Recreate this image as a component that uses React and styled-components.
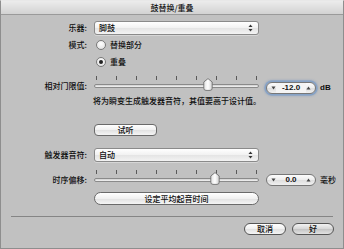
import React from "react";
import styled, { createGlobalStyle } from "styled-components";

const Global = createGlobalStyle`
  html, body { margin: 0; padding: 0; background: #c2c2c2; }
  body { font-family: "Noto Sans CJK SC", "Noto Sans", sans-serif; }
  * { box-sizing: border-box; }
`;

const Window = styled.div`
  width: 344px;
  height: 249px;
  background: #c1c1c1;
  border: 1px solid #8e8e8e;
  border-top-color: #e8e8e8;
  display: flex;
  flex-direction: column;
  color: #0e0e0e;
  font-size: 8px;
  font-weight: 500;
  overflow: hidden;
`;

const TitleBar = styled.div`
  height: 14px;
  flex: none;
  background: linear-gradient(#ececec, #d2d2d2);
  border-bottom: 1px solid #9a9a9a;
  display: flex;
  align-items: center;
  justify-content: center;
  font-size: 8px;
  line-height: 1;
  color: #111;
`;

const Row = styled.div`
  display: flex;
  align-items: ${(p) => p.$align || "center"};
  height: ${(p) => p.$h}px;
  margin-top: ${(p) => p.$mt}px;
  flex: none;
`;

const Label = styled.div`
  width: 86px;
  margin-right: 7px;
  text-align: right;
  white-space: nowrap;
  line-height: 1;
  margin-top: ${(p) => p.$pt || 0}px;
`;

const Spacer = styled.div`
  width: 93px;
  flex: none;
`;

const Popup = styled.div`
  width: 165px;
  height: 14px;
  border: 1px solid #8a8a8a;
  border-radius: 3px;
  background: linear-gradient(#ffffff, #f1f1f1 50%, #e4e4e4 51%, #f3f3f3);
  display: flex;
  align-items: center;
  justify-content: space-between;
  padding: 0 5px 0 4px;
  line-height: 1;
  box-shadow: 0 1px 0 rgba(255,255,255,0.35);
`;

const Arrows = () => (
  <svg width="5" height="8" viewBox="0 0 5 8">
    <path d="M2.5 0.5 L4.5 3 L0.5 3 Z" fill="#333" />
    <path d="M2.5 7.5 L4.5 5 L0.5 5 Z" fill="#333" />
  </svg>
);

const RadioLabel = styled.label`
  display: flex;
  align-items: center;
  gap: 4px;
  line-height: 1;
  margin-left: 2px;
`;

const RadioDot = styled.span`
  width: 10px;
  height: 10px;
  border-radius: 50%;
  border: 1px solid #7a7a7a;
  background: radial-gradient(circle at 50% 35%, #ffffff, #e6e6e6 70%, #d0d0d0);
  display: flex;
  align-items: center;
  justify-content: center;
  &::after {
    content: "";
    width: 4px;
    height: 4px;
    border-radius: 50%;
    background: ${(p) => (p.$on ? "#222" : "transparent")};
  }
`;

const SliderBox = styled.div`
  position: relative;
  width: 165px;
  height: 20px;
  flex: none;
`;

const Ticks = styled.div`
  display: flex;
  gap: 19px;
  padding-left: 2px;
  height: 4px;
`;

const Tick = styled.span`
  width: 1px;
  height: 4px;
  background: #5a5a5a;
`;

const Track = styled.div`
  margin-top: 4px;
  height: 4px;
  border: 1px solid #8a8a8a;
  border-radius: 2px;
  background: linear-gradient(#cfcfcf, #f4f4f4);
`;

const Thumb = styled.svg`
  position: absolute;
  top: 2px;
`;

const Slider = ({ at }) => (
  <SliderBox>
    <Ticks>
      {Array.from({ length: 9 }).map((_, i) => (
        <Tick key={i} />
      ))}
    </Ticks>
    <Track />
    <Thumb style={{ left: at - 5 }} width="10" height="13" viewBox="0 0 10 13">
      <defs>
        <linearGradient id="tg" x1="0" x2="1" y1="0" y2="0">
          <stop offset="0" stopColor="#e0e0e0" />
          <stop offset="0.5" stopColor="#ffffff" />
          <stop offset="1" stopColor="#cfcfcf" />
        </linearGradient>
      </defs>
      <path
        d="M5 0.6 L9.2 4 L9.2 10.2 Q9.2 12.4 7 12.4 L3 12.4 Q0.8 12.4 0.8 10.2 L0.8 4 Z"
        fill="url(#tg)"
        stroke="#6e6e6e"
        strokeWidth="0.9"
      />
    </Thumb>
  </SliderBox>
);

const Stepper = styled.div`
  width: 50px;
  height: 12px;
  margin-left: 7px;
  margin-top: ${(p) => p.$mt}px;
  border: 1px solid #777;
  border-radius: 6px;
  background: linear-gradient(#fdfdfd, #ececec 50%, #dedede 51%, #f0f0f0);
  display: flex;
  align-items: center;
  justify-content: space-between;
  padding: 0 4px;
  line-height: 1;
  font-size: 8px;
  font-weight: bold;
  font-family: "Liberation Sans", Arial, sans-serif;
  color: #111;
  box-shadow: ${(p) => (p.$focus ? "0 0 0 1.5px #86a2c6, 0 0 2px 2px rgba(120,150,190,0.6)" : "none")};
`;

const StepValue = styled.span`
  flex: 1;
  text-align: center;
  background: ${(p) => (p.$focus ? "#f4f4f4" : "transparent")};
  padding: 1px 0;
`;

const Tri = ({ up }) => (
  <svg width="5" height="4" viewBox="0 0 5 4">
    <path d={up ? "M2.5 0.5 L4.5 3.5 L0.5 3.5 Z" : "M0.5 0.5 L4.5 0.5 L2.5 3.5 Z"} fill="#444" />
  </svg>
);

const Unit = styled.span`
  margin-left: 4px;
  margin-top: ${(p) => p.$mt}px;
  line-height: 12px;
  font-family: ${(p) => (p.$latin ? '"Liberation Sans", Arial, sans-serif' : 'inherit')};
  font-weight: ${(p) => (p.$latin ? "bold" : "500")};
`;

const Note = styled.div`
  line-height: 1;
  white-space: nowrap;
  margin-left: -1px;
`;

const PushButton = styled.button`
  width: ${(p) => p.$w}px;
  height: ${(p) => p.$h || 12}px;
  padding: 0;
  border: 1px solid ${(p) => (p.$dark ? "#555" : "#6a6a6a")};
  border-radius: ${(p) => p.$r}px;
  background: ${(p) =>
    p.$default
      ? "linear-gradient(#f2f2f2, #d6d6d6 50%, #c4c4c4 51%, #e2e2e2)"
      : "linear-gradient(#ffffff, #f0f0f0 50%, #e1e1e1 51%, #f5f5f5)"};
  font-family: "Noto Sans CJK SC", sans-serif;
  font-size: 8px;
  font-weight: 500;
  line-height: 1;
  color: #111;
  display: flex;
  align-items: center;
  justify-content: center;
  flex: none;
`;

const Separator = styled.div`
  height: 1px;
  background: #858585;
  margin: 11px 10px 0 10px;
  flex: none;
`;

const Footer = styled.div`
  display: flex;
  justify-content: flex-end;
  gap: 6px;
  padding-right: 9px;
  margin-top: 6px;
`;

export default function App() {
  return (
    <>
      <Global />
      <Window>
        <TitleBar>鼓替换/重叠</TitleBar>

        <Row $h={14} $mt={6}>
          <Label>乐器:</Label>
          <Popup>
            <span>脚鼓</span>
            <Arrows />
          </Popup>
        </Row>

        <Row $h={14} $mt={3}>
          <Label>模式:</Label>
          <RadioLabel>
            <RadioDot />
            替换部分
          </RadioLabel>
        </Row>

        <Row $h={14} $mt={3}>
          <Spacer />
          <RadioLabel>
            <RadioDot $on />
            重叠
          </RadioLabel>
        </Row>

        <Row $h={20} $mt={7} $align="flex-start">
          <Label $pt={6}>相对门限值:</Label>
          <Slider at={114} />
          <Stepper $mt={6} $focus>
            <Tri />
            <StepValue $focus>-12.0</StepValue>
            <Tri up />
          </Stepper>
          <Unit $mt={6} $latin>dB</Unit>
        </Row>

        <Row $h={10} $mt={0}>
          <Spacer />
          <Note>将为瞬变生成触发器音符，其值要高于设计值。</Note>
        </Row>

        <Row $h={12} $mt={18}>
          <Spacer />
          <PushButton $w={63} $r={4}>试听</PushButton>
        </Row>

        <Row $h={14} $mt={12}>
          <Label>触发器音符:</Label>
          <Popup>
            <span>自动</span>
            <Arrows />
          </Popup>
        </Row>

        <Row $h={20} $mt={8} $align="flex-start">
          <Label $pt={6}>时序偏移:</Label>
          <Slider at={121} />
          <Stepper $mt={4}>
            <Tri />
            <StepValue>0.0</StepValue>
            <Tri up />
          </Stepper>
          <Unit $mt={4}>毫秒</Unit>
        </Row>

        <Row $h={13} $mt={2}>
          <Spacer />
          <PushButton $w={165} $h={13} $r={7}>设定平均起音时间</PushButton>
        </Row>

        <Separator />

        <Footer>
          <PushButton $w={42} $r={6} $dark>取消</PushButton>
          <PushButton $w={42} $r={6} $dark $default>好</PushButton>
        </Footer>
      </Window>
    </>
  );
}
